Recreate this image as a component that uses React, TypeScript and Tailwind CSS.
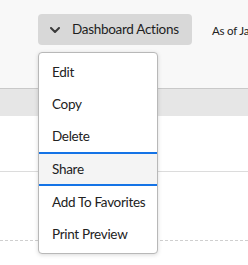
import React from "react";

export default function App() {
  const items = ["Edit", "Copy", "Delete", "Share", "Add To Favorites", "Print Preview"];
  return (
    <div
      className="relative w-[248px] h-[265px] overflow-hidden bg-white text-[#222]"
      style={{ fontFamily: "Lato, 'Open Sans', sans-serif" }}
    >
      <div className="h-[88px] bg-[#f8f8f8] pt-[14px] pl-[38px] flex items-start">
        <button className="shrink-0 h-[31px] w-[154px] rounded-[4px] bg-[#d8d8d8] flex items-center pl-[12px] gap-[12px] text-[13.5px] tracking-[-0.3px] text-[#1e1e1e] whitespace-nowrap">
          <svg width="10" height="6" viewBox="0 0 10 6" className="shrink-0">
            <path d="M1 1 L5 5 L9 1" fill="none" stroke="#3a3a3a" strokeWidth="2" strokeLinecap="round" strokeLinejoin="round" />
          </svg>
          <span>Dashboard Actions</span>
        </button>
        <span className="shrink-0 ml-[20px] mt-[8px] text-[11.5px] tracking-[-0.2px] whitespace-nowrap text-[#222]">As of January 2024</span>
      </div>
      <div className="h-[28px] border-t border-[#c9c9c9] bg-[#e6e6e6]" />
      <div className="h-[56px] border-b border-[#dcdcdc]" />
      <div className="h-[69px] border-b border-dashed border-[#cfcfcf]" />

      <div className="absolute left-[38px] top-[52px] w-[120px] rounded-[4px] border border-[#b8b8b8] bg-white py-[3px] shadow-[0_1px_4px_rgba(0,0,0,0.15)] whitespace-nowrap text-[13.5px] tracking-[-0.3px]">
        {items.map((label) =>
          label === "Share" ? (
            <div
              key={label}
              className="h-[34px] flex items-center pl-[13px] bg-[#f4f4f4] border-y-2 border-[#1473e6]"
            >
              {label}
            </div>
          ) : (
            <div key={label} className="h-[32px] flex items-center pl-[13px]">
              {label}
            </div>
          )
        )}
      </div>
    </div>
  );
}
